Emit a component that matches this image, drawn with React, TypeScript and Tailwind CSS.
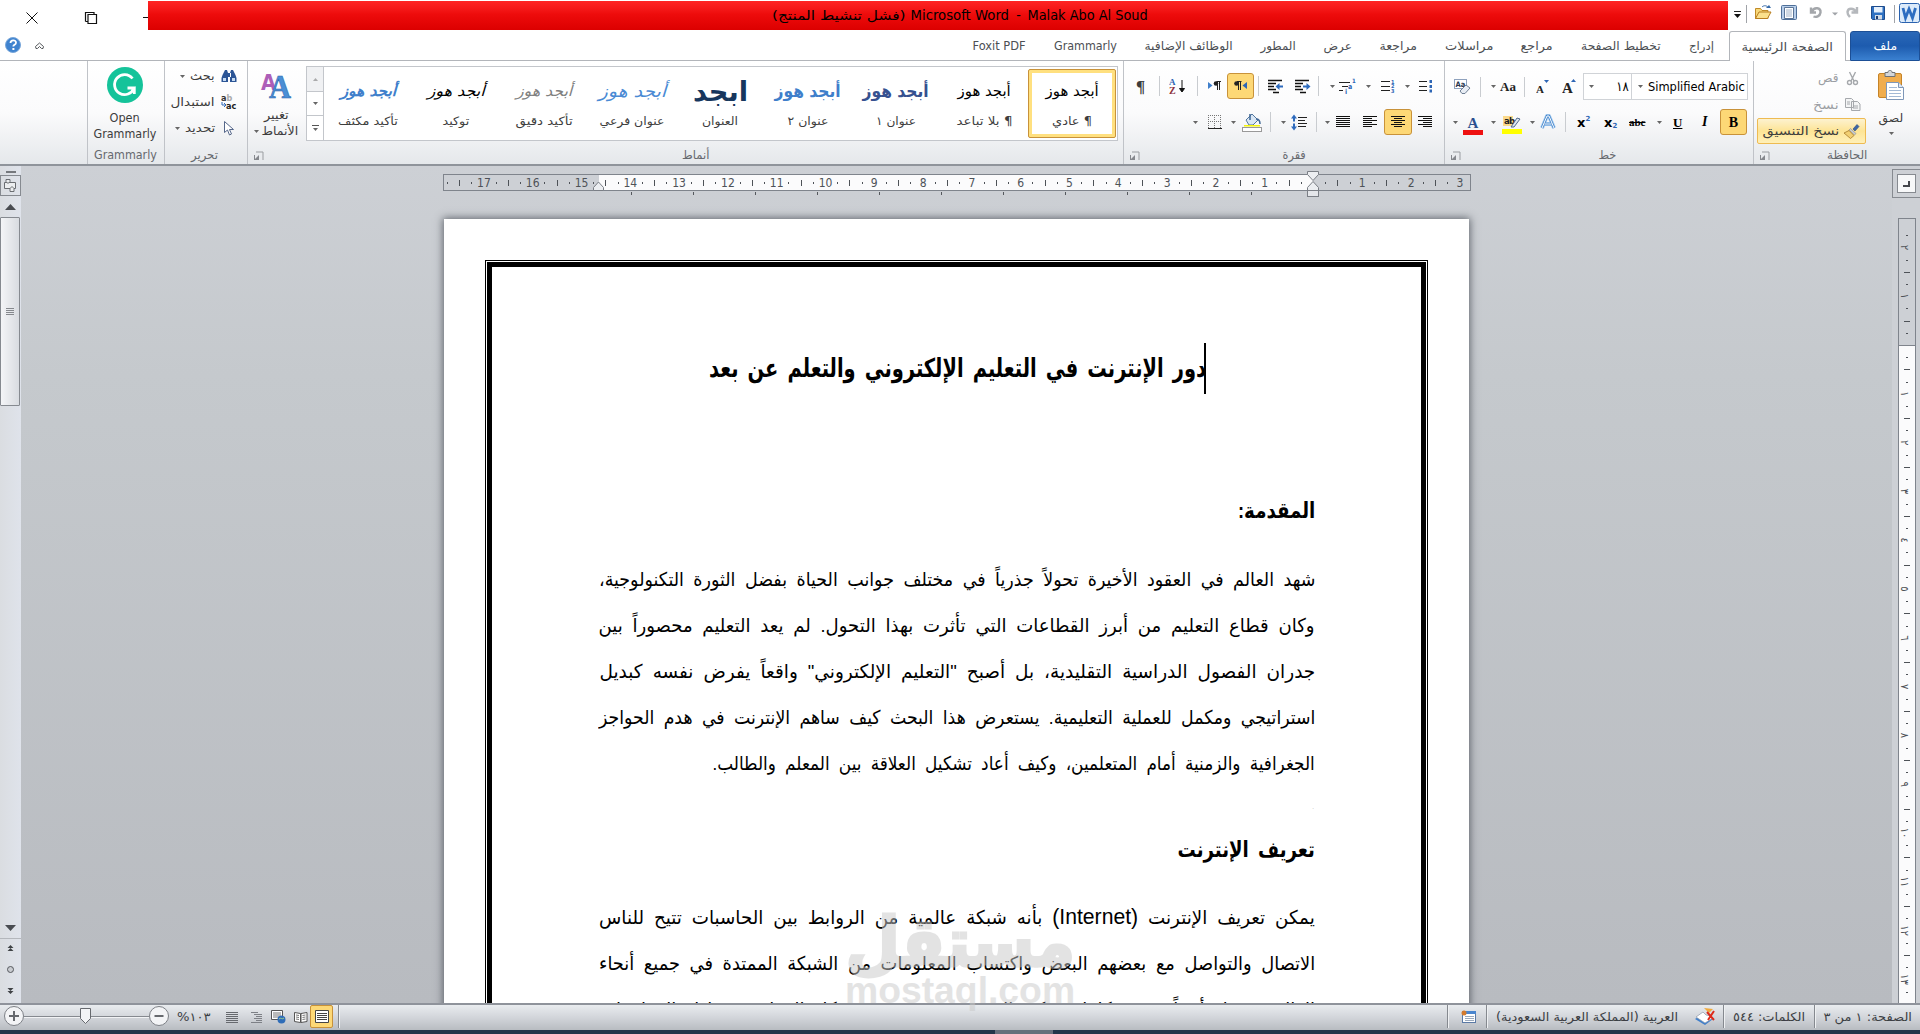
import React, { useLayoutEffect, useRef, useState } from 'react';

// Text squeezed or stretched horizontally to the width of its box
const Fit = ({ children, className = '', dir = 'auto' }: { children: React.ReactNode, className?: string, dir?: string }) => {
  const box = useRef<HTMLDivElement>(null);
  const inner = useRef<HTMLSpanElement>(null);
  const [scale, setScale] = useState(1);

  useLayoutEffect(() => {
    if (box.current && inner.current && inner.current.offsetWidth > 0) {
      setScale(box.current.clientWidth / inner.current.offsetWidth);
    }
  }, [children]);

  return (
    <div ref={box} className={`flex shrink-0 justify-center whitespace-pre ${className}`}>
      <span ref={inner} dir={dir} className="inline-block shrink-0" style={{ transform: `scaleX(${scale})` }}>{children}</span>
    </div>
  );
};

const Caret = ({ className = '' }: { className?: string }) => (
  <svg className={`shrink-0 ${className}`} width="5" height="3" viewBox="0 0 5 3"><path d="M0 0h5L2.5 3z" fill="#666" /></svg>
);

const Sep = ({ className = '' }: { className?: string }) => (
  <div className={`w-px h-5 shrink-0 bg-[#c9ccd0] ${className}`} />
);

const Launcher = () => (
  <svg className="shrink-0" width="10" height="10" viewBox="0 0 10 10">
    <path d="M2 1h7v8" fill="none" stroke="#9a9da1" />
    <path d="M0 4h1v4h4v1H0zM1 8l4-4v4z" fill="#85888d" />
  </svg>
);

// Bars of text used by the alignment icons; each row is [x, width]
const Bars = ({ rows, color = '#111', className = '' }: { rows: number[][], color?: string, className?: string }) => (
  <svg className={`shrink-0 ${className}`} width="14" height="12" viewBox="0 0 14 12" shapeRendering="crispEdges">
    {rows.map(([x, w], i) => <rect key={i} x={x} y={i * 2} width={w} height="1" fill={color} />)}
  </svg>
);

const Group = ({ label, launcher = false, className, labelClass, children }: {
  label: string,
  launcher?: boolean,
  className: string,
  labelClass: string,
  children: React.ReactNode,
}) => (
  <div className={`flex flex-col shrink-0 h-[103px] border-r border-r-[#c0c3c8] ${className}`}>
    <div className="h-[84px] flex">{children}</div>
    <div className="h-[19px] flex items-center relative text-[#66696e]">
      {launcher && <div className="absolute left-[6px] top-[6px]"><Launcher /></div>}
      <div className="flex-1 flex justify-center"><Fit className={labelClass}>{label}</Fit></div>
    </div>
  </div>
);

const TABS = [
  { text: 'Foxit PDF', w: 'w-[53px]' },
  { text: 'Grammarly', w: 'w-[63px]' },
  { text: 'الوظائف الإضافية', w: 'w-[88px]' },
  { text: 'المطور', w: 'w-[35px]' },
  { text: 'عرض', w: 'w-[28px]' },
  { text: 'مراجعة', w: 'w-[37px]' },
  { text: 'مراسلات', w: 'w-[48px]' },
  { text: 'مراجع', w: 'w-[32px]' },
  { text: 'تخطيط الصفحة', w: 'w-[80px]' },
  { text: 'إدراج', w: 'w-[25px]' },
];

const STYLES = [
  { sample: 'أبجد هوز', name: 'تأكيد مكثف', sw: 'w-[56px] text-[#3f7fcb] italic font-bold', nw: 'w-[60px]' },
  { sample: 'أبجد هوز', name: 'توكيد', sw: 'w-[57px] text-black italic', nw: 'w-[27px]' },
  { sample: 'أبجد هوز', name: 'تأكيد دقيق', sw: 'w-[56px] text-[#808080] italic', nw: 'w-[57px]' },
  { sample: 'أبجد هوز', name: 'عنوان فرعي', sw: 'w-[68px] text-[#4a8ad4] italic text-[17px]', nw: 'w-[65px]' },
  { sample: 'ابجد', name: 'العنوان', sw: 'w-[55px] text-[#17365d] text-[27px] font-bold', nw: 'w-[36px]' },
  { sample: 'أبجد هوز', name: 'عنوان ٢', sw: 'w-[66px] text-[#3f7fcb] text-[17px] font-bold', nw: 'w-[41px]' },
  { sample: 'أبجد هوز', name: 'عنوان ١', sw: 'w-[66px] text-[#365190] text-[17px] font-bold', nw: 'w-[40px]' },
  { sample: 'أبجد هوز', name: '¶ بلا تباعد', sw: 'w-[53px] text-black', nw: 'w-[56px]' },
  { sample: 'أبجد هوز', name: '¶ عادي', sw: 'w-[53px] text-black', nw: 'w-[40px]' },
];

const TitleBar = () => (
  <div className="h-[31px] flex shrink-0 bg-white">
    <svg className="shrink-0" width="148" height="31" viewBox="0 0 148 31" fill="none" stroke="#111">
      <path d="M26.5 12.5l11 11M37.5 12.5l-11 11" />
      <path d="M88 14.5h8.5v9H88zM85.500 21.500v-9H94V14M85.500 21.500H88" strokeWidth="1.200" />
      <path d="M143 17.500h5" />
    </svg>
    <div className="w-[1580px] h-[29px] mt-px shrink-0 flex items-center bg-linear-to-b from-[#ff2424] via-[#ee0c0c] via-45% to-[#dc0000] text-[14px] leading-[29px] text-black pl-[624px]">
      <Fit className="w-[133px] text-[13px]">(فشل تنشيط المنتج)</Fit>
      <Fit className="w-[99px] ml-[5px]">Microsoft Word</Fit>
      <Fit className="w-[5px] ml-[7px]">-</Fit>
      <Fit className="w-[120px] ml-[7px]">Malak Abo Al Soud</Fit>
    </div>
    <svg className="shrink-0" width="192" height="31" viewBox="1728 0 192 31">
      <path d="M1734 11.500h7" stroke="#222" />
      <path d="M1734 14h7l-3.500 4z" fill="#111" />
      <path d="M1746.500 5v18M1894.500 5v18" stroke="#a0a3a8" />
      {/* open */}
      <path d="M1755.500 18.500v-10h5l1.500 2h6v8z" fill="#f8d878" stroke="#c08a28" />
      <path d="M1755.500 18.500l3.500-6.500h12l-3.500 6.500z" fill="#fbe08c" stroke="#b87d20" />
      <path d="M1762 7c2-2 5-1.500 6 .5" fill="none" stroke="#3569a8" />
      <path d="M1766 8l5 0-2-3z" fill="#3569a8" />
      {/* page preview */}
      <rect x="1781.500" y="5.500" width="15" height="14" rx="1" fill="#b6cde9" stroke="#4f7099" />
      <path d="M1784.500 7.500h9v11h-9z" fill="#fff" stroke="#5b7597" />
      <path d="M1786 10h6M1786 12h6M1786 14h6M1786 16h6" stroke="#8aa1bd" strokeWidth=".8" />
      {/* undo, redo */}
      <path d="M1811 7.500v5h5M1812 11.500c2-5 9-4 8.500 1-.5 4-4.500 5-7 4" fill="none" stroke="#a4a7ab" strokeWidth="2.400" />
      <path d="M1832 12.500h6l-3 3z" fill="#a0a3a8" />
      <path d="M1857 7v5.500h-5.500M1856 12c-2-4-8-4.500-8.500 0 0 3 1.500 4 2.500 5" fill="none" stroke="#b5b8bc" strokeWidth="2.400" />
      {/* save */}
      <path d="M1871.500 6.500h13v13h-12l-1-1z" fill="#2f71c2" stroke="#1e4b8c" />
      <path d="M1874 7h8.500v5.500h-8.500z" fill="#e6f0fb" />
      <path d="M1875 15h7v4.500h-7z" fill="#d4dbe5" />
      <path d="M1876 16h2v3h-2z" fill="#1e3d70" />
      {/* Word */}
      <rect x="1899.500" y="3.500" width="20" height="19" rx="2" fill="#dcebfa" stroke="#2a62ae" />
      <path d="M1903 8l2.500 10 3.500-9 3.500 9 3-10" fill="none" stroke="#2d6dc0" strokeWidth="2.800" />
    </svg>
  </div>
);

const TabRow = () => (
  <div className="h-[30px] flex shrink-0 items-end bg-white text-[12px] text-[#4c4f54]">
    <div className="w-[1729px] h-[30px] flex items-center border-b border-[#b2b5ba] shrink-0">
      <svg className="shrink-0 ml-[5px]" width="42" height="20" viewBox="0 0 42 20">
        <circle cx="8" cy="9" r="7.500" fill="#3f83cf" stroke="#79a7da" />
        <path d="M5.500 7c0-3.500 5.500-3.500 5.500-.3C11 9 8.300 8.700 8.300 10.500" fill="none" stroke="#fff" strokeWidth="1.800" />
        <rect x="7.400" y="12" width="2" height="2" fill="#fff" />
        <path d="M31 12.500l-.5-2 4-3.500 4 3.500-.5 2h-1.500l-2-2-2 2z" fill="#fff" stroke="#54575b" />
      </svg>
      <div className="flex gap-7 ml-[926px]">
        {TABS.map((t) => <Fit key={t.text} className={t.w}>{t.text}</Fit>)}
      </div>
    </div>
    <div className="w-[117px] h-[30px] shrink-0 border border-b-0 border-[#b2b5ba] rounded-t-[3px] flex items-center justify-center">
      <Fit className="w-[91px]">الصفحة الرئيسية</Fit>
    </div>
    <div className="w-[4px] h-[30px] border-b border-[#b2b5ba] shrink-0" />
    <div className="w-[70px] h-[30px] shrink-0 rounded-t-[3px] border border-[#1c4f96] bg-linear-to-b from-[#2a68b8] via-[#1d5bae] to-[#3a80d0] text-white flex items-center justify-center">
      <Fit className="w-[24px]">ملف</Fit>
    </div>
  </div>
);

const StylesGallery = () => (
  <div className="w-[812px] h-[75px] mt-[5px] ml-[6px] flex border border-[#c3c6cb] bg-white shrink-0">
    <div className="w-[17px] flex flex-col border-r border-[#c3c6cb] shrink-0">
      <div className="h-[25px] flex items-center justify-center border-b border-[#c3c6cb] bg-[#f0f1f3]">
        <Caret className="rotate-180 opacity-50" />
      </div>
      <div className="h-[24px] flex items-center justify-center border-b border-[#c3c6cb]"><Caret /></div>
      <div className="flex-1 flex flex-col gap-[2px] items-center justify-center">
        <div className="w-[7px] h-px bg-[#555]" />
        <Caret />
      </div>
    </div>
    {STYLES.map((s, i) => (
      <div
        key={s.name}
        className={`w-[88px] h-[69px] mt-[2px] shrink-0 flex flex-col items-center rounded-[2px] ${i === 8 ? 'border border-[#c8923a] p-[3px] bg-[#ffe07f]' : 'p-1'}`}
      >
        <div className="w-[80px] h-[61px] bg-white flex flex-col items-center">
          <div className="h-[37px] flex items-center text-[15px] leading-none"><Fit className={s.sw}>{s.sample}</Fit></div>
          <div className="h-[24px] flex items-center text-[11.500px] text-[#3d3d3d]"><Fit dir="rtl" className={s.nw}>{s.name}</Fit></div>
        </div>
      </div>
    ))}
  </div>
);

const ParagraphTools = () => (
  <div className="flex flex-col">
    <div className="h-[26px] mt-[12px] flex items-center">
      <span className="ml-[12px] w-[10px] text-[17px] leading-none font-bold font-['Liberation_Serif',serif]">¶</span>
      <Sep className="ml-[13px]" />
      <svg className="ml-[9px] shrink-0" width="16" height="18" viewBox="0 0 16 18">
        <text x="0" y="8" fontSize="9" fontWeight="bold" fill="#2e66b5" fontFamily="Liberation Serif, serif">A</text>
        <text x="0" y="17" fontSize="10" fontWeight="bold" fill="#8c2f3c" fontFamily="Liberation Serif, serif">Z</text>
        <path d="M13 3v11M10.500 11.500L13 15l2.500-3.500z" stroke="#111" fill="#111" />
      </svg>
      <Sep className="ml-[12px]" />
      <svg className="ml-[10px] shrink-0" width="13" height="12" viewBox="0 0 13 12">
        <path d="M0 2l4.500 3.500L0 9z" fill="#3f7fcb" />
        <path d="M8.500 1.500H13M9.500 1.500V10M11.500 1.500V10" stroke="#222" fill="none" />
        <circle cx="8" cy="3.500" r="2.300" fill="#222" />
      </svg>
      <div className="ml-[6px] w-[27px] h-[26px] shrink-0 rounded-[3px] border border-[#c8923a] bg-[#fdd876] flex items-center justify-center">
        <svg width="13" height="12" viewBox="0 0 13 12">
          <path d="M13 2L8.500 5.500 13 9z" fill="#2e66b5" />
          <path d="M3 1.500h4.500M4.500 1.500V10M6.500 1.500V10" stroke="#222" fill="none" />
          <circle cx="2.500" cy="3.500" r="2.300" fill="#222" />
        </svg>
      </div>
      <Sep className="ml-[4px]" />
      <svg className="ml-[8px] shrink-0" width="17" height="15" viewBox="0 0 17 15">
        <path d="M1 1.500h14M1 4.500h8M1 7.500h6M1 10.500h8M6 13.500h6" stroke="#111" strokeWidth="1.300" />
        <path d="M8.500 7.500l4-3.500v2.500H16v2h-3.500V11z" fill="#2e6bbd" />
      </svg>
      <svg className="ml-[10px] shrink-0" width="17" height="15" viewBox="0 0 17 15">
        <path d="M1 1.500h14M1 4.500h8M1 7.500h6M1 10.500h8M6 13.500h6" stroke="#111" strokeWidth="1.300" />
        <path d="M16.500 7.500l-4-3.500v2.500H9v2h3.500V11z" fill="#2e6bbd" />
      </svg>
      <Sep className="ml-[7px]" />
      <Caret className="ml-[11px]" />
      <svg className="ml-[4px] shrink-0" width="17" height="16" viewBox="0 0 17 16">
        <path d="M0 4.500h11M3 8.500h6M0 12.500h4" stroke="#222" />
        <text x="13" y="5" fontSize="6" fontWeight="bold" fill="#2e66b5">1</text>
        <text x="9" y="10.500" fontSize="7" fontWeight="bold" fill="#2e66b5">a</text>
        <text x="6" y="15.500" fontSize="7" fontWeight="bold" fill="#2e66b5">i</text>
      </svg>
      <Caret className="ml-[10px]" />
      <svg className="ml-[10px] shrink-0" width="14" height="14" viewBox="0 0 14 14">
        <path d="M0 2.500h9M0 7.500h9M0 11.500h9" stroke="#222" />
        <text x="10" y="4.500" fontSize="5.500" fontWeight="bold" fill="#2e66b5">1</text>
        <text x="10" y="9" fontSize="5.500" fontWeight="bold" fill="#2e66b5">2</text>
        <text x="10" y="13.500" fontSize="5.500" fontWeight="bold" fill="#2e66b5">3</text>
      </svg>
      <Caret className="ml-[10px]" />
      <svg className="ml-[9px] shrink-0" width="14" height="14" viewBox="0 0 14 14">
        <path d="M0 2.500h8M0 7.500h8M0 11.500h8" stroke="#222" />
        <path d="M10.500 1h2.500v3h-2.500zM10.500 6h2.500v3h-2.500zM10.500 10.500h2.500v3h-2.500z" fill="#2e66b5" />
      </svg>
    </div>
    <div className="h-[26px] mt-[10px] flex items-center">
      <Caret className="ml-[69px]" />
      <svg className="ml-[10px] shrink-0" width="14" height="14" viewBox="0 0 14 14">
        <path d="M.5 0v14M6.500 0v14M12.500 0v14M0 .5h13M0 6.500h13" stroke="#777" strokeDasharray="1 1" />
        <path d="M0 13.500h14" stroke="#222" />
      </svg>
      <Caret className="ml-[9px]" />
      <svg className="ml-[6px] shrink-0" width="20" height="19" viewBox="0 0 20 19">
        <path d="M4 7l6-6 6 6-5 5H7z" fill="#d9e6f4" stroke="#53779f" />
        <path d="M8 1v6M14 6c3 0 4 2 4 5" fill="none" stroke="#3d6594" strokeWidth="1.500" />
        <rect x="2" y="12" width="16" height="1.500" fill="#f5f50a" />
        <rect x=".5" y="14.500" width="19" height="4" fill="#fff" stroke="#999" />
      </svg>
      <Sep className="ml-[8px]" />
      <Caret className="ml-[10px]" />
      <svg className="ml-[5px] shrink-0" width="16" height="17" viewBox="0 0 16 17">
        <path d="M3 .5l3 4H4v3H2v-3H0zM3 16.500l3-4H4v-3H2v3H0z" fill="#2e6bbd" />
        <path d="M7 3.500h9M7 6.500h7M7 9.500h9M7 12.500h8" stroke="#222" />
      </svg>
      <Sep className="ml-[9px]" />
      <Caret className="ml-[8px]" />
      <Bars className="ml-[6px]" rows={[[0, 14], [0, 14], [0, 14], [0, 14], [0, 14], [0, 14]]} />
      <Bars className="ml-[13px]" rows={[[0, 14], [0, 9], [0, 14], [0, 9], [0, 14], [0, 9]]} />
      <div className="ml-[7px] w-[28px] h-[26px] shrink-0 rounded-[3px] border border-[#c8923a] bg-[#fdd876] flex items-center justify-center">
        <Bars rows={[[0, 14], [3, 8], [0, 14], [3, 8], [0, 14], [3, 8]]} />
      </div>
      <Bars className="ml-[6px]" rows={[[0, 14], [5, 9], [0, 14], [5, 9], [0, 14], [5, 9]]} />
    </div>
  </div>
);

const FontTools = () => (
  <div className="flex flex-col text-black">
    <div className="h-[27px] mt-[12px] flex items-center">
      <svg className="ml-[9px] shrink-0" width="17" height="17" viewBox="0 0 17 17">
        <rect x=".5" y="1.500" width="12" height="9" fill="#fff" stroke="#8fa2bd" />
        <text x="1.500" y="8.500" fontSize="7.500" fontWeight="bold" fill="#26354d">Aa</text>
        <path d="M6 13l6-6 4 3-5 5.500H8z" fill="#e8edf4" stroke="#6f7f94" />
      </svg>
      <Sep className="ml-[9px]" />
      <Caret className="ml-[10px]" />
      <span className="ml-[4px] w-[17px] text-[13px] leading-none font-bold font-['Liberation_Serif',serif] text-[#222]">Aa</span>
      <Sep className="ml-[7px]" />
      <svg className="ml-[11px] shrink-0" width="14" height="17" viewBox="0 0 14 17">
        <text x="0" y="15" fontSize="11" fontWeight="bold" fill="#222" fontFamily="Liberation Serif, serif">A</text>
        <path d="M8 2h5l-2.500 3z" fill="#2e66b5" />
      </svg>
      <svg className="ml-[12px] shrink-0" width="15" height="17" viewBox="0 0 15 17">
        <text x="0" y="15" fontSize="15" fontWeight="bold" fill="#222" fontFamily="Liberation Serif, serif">A</text>
        <path d="M9 4h5l-2.500-3z" fill="#2e66b5" />
      </svg>
      <div className="ml-[6px] w-[49px] h-[27px] shrink-0 border border-[#d0d3d7] bg-white flex items-center text-[13px]">
        <Caret className="ml-[5px]" />
        <Fit className="ml-[22px] w-[13px]">١٨</Fit>
      </div>
      <div className="-ml-px w-[117px] h-[27px] shrink-0 border border-[#d0d3d7] bg-white flex items-center text-[13px]">
        <Caret className="ml-[6px]" />
        <Fit className="ml-[5px] w-[97px]">Simplified Arabic</Fit>
      </div>
    </div>
    <div className="h-[26px] mt-[9px] flex items-center font-['Liberation_Serif',serif]">
      <Caret className="ml-[8px]" />
      <div className="ml-[5px] w-[20px] shrink-0 flex flex-col items-center pt-[6px]">
        <span className="text-[15px] leading-[14px] font-bold text-[#2b4f8f]">A</span>
        <div className="w-[20px] h-[5px] bg-[#ee1111]" />
      </div>
      <Caret className="ml-[8px]" />
      <svg className="ml-[6px] mt-[3px] shrink-0" width="20" height="20" viewBox="0 0 20 20">
        <rect x="1" y="2" width="10" height="10" fill="#fbd98a" />
        <text x="2" y="10" fontSize="9.500" fontWeight="bold" fill="#222" fontFamily="DejaVu Sans Condensed" textLength="11">ab</text>
        <path d="M9 13l6-9 3 1-6 8z" fill="#dfe6f0" stroke="#516a8c" />
        <rect y="15" width="20" height="5" fill="#ffff00" />
      </svg>
      <Caret className="ml-[8px]" />
      <svg className="ml-[5px] shrink-0" width="16" height="16" viewBox="0 0 16 16">
        <path d="M2 14L7 2h2l5 12M4.500 10h7" fill="none" stroke="#a9cdf0" strokeWidth="4" strokeLinejoin="round" />
        <path d="M2 14L7 2h2l5 12M4.500 10h7" fill="none" stroke="#4586cc" strokeWidth="2.400" />
        <path d="M2 14L7 2h2l5 12M4.500 10h7" fill="none" stroke="#fff" strokeWidth="1" />
      </svg>
      <Sep className="ml-[9px]" />
      <span className="ml-[11px] w-[13px] shrink-0 whitespace-nowrap text-[13px] leading-none font-bold font-['DejaVu_Sans']">x<sup className="text-[7px] text-[#2e66b5] -top-[6px]">2</sup></span>
      <span className="ml-[14px] w-[13px] shrink-0 whitespace-nowrap text-[13px] leading-none font-bold font-['DejaVu_Sans']">x<sub className="text-[7px] text-[#2e66b5]">2</sub></span>
      <span className="ml-[12px] w-[17px] shrink-0 text-[11px] leading-none font-bold line-through">abc</span>
      <Caret className="ml-[11px]" />
      <span className="ml-[11px] w-[10px] shrink-0 text-[13px] leading-none font-bold underline">U</span>
      <span className="ml-[19px] w-[8px] shrink-0 text-[14px] leading-none font-bold italic">I</span>
      <div className="ml-[10px] w-[27px] h-[26px] shrink-0 rounded-[3px] border border-[#c8923a] bg-[#fdd876] flex items-center justify-center text-[14px] font-bold">B</div>
    </div>
  </div>
);

const Clipboard = () => (
  <>
    <div className="w-[110px] ml-[3px] flex flex-col shrink-0 text-[12px] text-[#9b9ea3]">
      <div className="h-[26px] mt-[4px] flex items-center justify-end pr-[7px]">
        <Fit className="w-[20px]">قص</Fit>
        <svg className="ml-[7px]" width="15" height="15" viewBox="0 0 15 15" fill="none" stroke="#a5a8ac" strokeWidth="1.400">
          <path d="M4.500 1l4.500 9M10.500 1L6 10" />
          <circle cx="4.500" cy="11.500" r="2" />
          <circle cx="10.500" cy="11.500" r="2" />
        </svg>
      </div>
      <div className="h-[27px] flex items-center justify-end pr-[6px]">
        <Fit className="w-[26px]">نسخ</Fit>
        <svg className="ml-[6px]" width="16" height="14" viewBox="0 0 16 14" fill="#f4f5f6" stroke="#a5a8ac">
          <path d="M.5.500h6l2 2v7h-8zM6.500 3.500h6l2.500 2.500v6.500H6.500z" />
          <path d="M2 4h3M2 6h3M8 8h5M8 10h5" />
        </svg>
      </div>
      <div className="h-[26px] w-[109px] rounded-[2px] border border-[#eebb52] bg-linear-to-b from-[#fdf2cf] via-[#fde495] to-[#fff0b8] flex items-center justify-end pr-[5px] text-[#3d3d3d]">
        <Fit className="w-[77px]">نسخ التنسيق</Fit>
        <svg className="ml-[5px]" width="16" height="15" viewBox="0 0 16 15">
          <path d="M9 5l4-4.500 2 2L11 7z" fill="#3c66a8" stroke="#284978" strokeWidth=".6" />
          <path d="M6.500 4.500l5.500 5-1.500 1.500-5.500-5z" fill="#c9cdd3" stroke="#777" strokeWidth=".5" />
          <path d="M5 6.500l5 5-3.500 3L0 9z" fill="#f2cf72" stroke="#9c6d1d" strokeWidth=".7" />
        </svg>
      </div>
    </div>
    <div className="flex flex-col items-center w-[32px] ml-[8px] mt-[9px] text-[12px] text-[#3d3d3d]">
      <svg width="27" height="30" viewBox="0 0 27 30">
        <rect x=".5" y="3.500" width="23" height="24" rx="1.500" fill="#f0ad4e" stroke="#c68428" />
        <path d="M7 2.500h3c0-3 4-3 4 0h3v4H7z" fill="#d3d6da" stroke="#6e7277" />
        <path d="M8.500 12.500h12l5 5v12h-17z" fill="#fff" stroke="#7e97b8" />
        <path d="M20.500 12.500v5h5" fill="#dfe8f3" stroke="#7e97b8" />
        <path d="M11 17.500h8M11 20.500h12M11 23.500h12M11 26.500h12" stroke="#a3b9d5" />
      </svg>
      <Fit className="w-[25px] mt-[9px] h-[18px] leading-[18px]">لصق</Fit>
      <Caret className="mt-[5px]" />
    </div>
  </>
);

const Ribbon = () => (
  <div className="h-[105px] shrink-0 flex bg-linear-to-b from-white via-[#fbfbfc] to-[#e5e8eb] border-b-2 border-[#8f949b] text-[12px] text-[#3d3d3d]">
    <div className="w-[88px] shrink-0 border-r border-r-[#c0c3c8]" />
    <Group label="Grammarly" className="w-[77px]" labelClass="w-[63px] mr-[2px]">
      <div className="flex flex-col items-center w-full pt-[6px] pr-[3px] text-[13px]">
        <svg width="36" height="36" viewBox="0 0 36 36">
          <circle cx="18" cy="18" r="18" fill="#15c39a" />
          <path d="M25.500 11.500A10 10 0 1 0 27 21h-6.500M27.300 20v7" fill="none" stroke="#fff" strokeWidth="2.800" />
        </svg>
        <Fit className="w-[30px] mt-[7px] h-[16px] leading-[16px]">Open</Fit>
        <Fit className="w-[63px] h-[16px] leading-[16px]">Grammarly</Fit>
      </div>
    </Group>
    <Group label="تحرير" className="w-[83px]" labelClass="w-[27px] mr-[3px]">
      <div className="w-full flex flex-col pt-[2px] pr-[10px]">
        <div className="h-[26px] flex items-center justify-end">
          <Caret />
          <Fit className="w-[25px] ml-[5px]">بحث</Fit>
          <svg className="ml-[6px]" width="16" height="14" viewBox="0 0 16 14">
            <path d="M1.500 6L4 1h2l1 3v9H.5V9zM14.500 6L12 1h-2L9 4v9h6.500V9zM6 4h4v4H6z" fill="#2c5596" />
            <path d="M2 9h3v3H2zM11 9h3v3h-3z" fill="#c6dbf2" />
          </svg>
        </div>
        <div className="h-[26px] flex items-center justify-end">
          <Fit className="w-[44px]">استبدال</Fit>
          <svg className="ml-[6px]" width="16" height="16" viewBox="0 0 16 16">
            <text x="0" y="7" fontSize="9" fontWeight="bold" fill="#333">a</text>
            <text x="5.500" y="7" fontSize="9" fontWeight="bold" fill="#aaa">b</text>
            <text x="5" y="15" fontSize="9" fontWeight="bold" fill="#222">ac</text>
            <path d="M1 8v3h3M3 9l2 2-2 2" fill="none" stroke="#2e66b5" />
          </svg>
        </div>
        <div className="h-[26px] flex items-center justify-end">
          <Caret />
          <Fit className="w-[30px] ml-[5px]">تحديد</Fit>
          <svg className="ml-[9px] mr-[3px]" width="10" height="15" viewBox="0 0 10 15">
            <path d="M.5.500v11l3-2.500 2 5 2-1-2-4.500h4z" fill="#fff" stroke="#55678a" />
          </svg>
        </div>
      </div>
    </Group>
    <Group label="أنماط" launcher className="w-[876px]" labelClass="w-[28px] ml-[20px]">
      <div className="w-[52px] pl-[4px] flex flex-col items-center shrink-0 pt-[10px]">
        <svg className="overflow-visible" width="30" height="28" viewBox="0 0 30 28">
          <text x="0" y="19" fontSize="22" fontWeight="bold" fill="#ad5fb8" fontFamily="DejaVu Sans" textLength="15" lengthAdjust="spacingAndGlyphs">A</text>
          <text x="8" y="27" fontSize="34" fontWeight="bold" fill="#4a8fd6" stroke="#2c66ad" strokeWidth=".6" fontFamily="Liberation Serif, serif" textLength="22" lengthAdjust="spacingAndGlyphs">A</text>
        </svg>
        <Fit className="w-[25px] mt-[9px] h-[15px] leading-[15px]">تغيير</Fit>
        <div className="flex items-center gap-[3px] h-[16px] leading-[16px]">
          <Caret />
          <Fit className="w-[37px]">الأنماط</Fit>
        </div>
      </div>
      <StylesGallery />
    </Group>
    <Group label="فقرة" launcher className="w-[321px]" labelClass="w-[23px] ml-[20px]"><ParagraphTools /></Group>
    <Group label="خط" launcher className="w-[309px]" labelClass="w-[18px] ml-[16px]"><FontTools /></Group>
    <Group label="الحافظة" launcher className="w-[166px] border-r-0" labelClass="w-[40px] ml-[20px]"><Clipboard /></Group>
  </div>
);

const ScrollBar = () => (
  <div className="w-[21px] shrink-0 bg-linear-to-r from-[#dadde1] to-[#dfe3eb] flex flex-col items-center">
    <div className="w-[10px] h-[2px] mt-[5px] bg-[#75787d] shrink-0" />
    <div className="w-[21px] h-[21px] mt-[2px] shrink-0 border border-[#868a90] flex items-center justify-center">
      <svg width="13" height="13" viewBox="0 0 13 13" fill="#eceef0" stroke="#6a6d72">
        <path d="M.5 3.500h11v6H.5z" />
        <path d="M2 .5h4v2l-2 2-2-2zM6 12.500h4v-3l-2-2-2 2z" />
      </svg>
    </div>
    <svg className="mt-[8px] shrink-0" width="11" height="6" viewBox="0 0 11 6"><path d="M0 6l5.500-6L11 6z" fill="#494c51" /></svg>
    <div className="w-[20px] h-[189px] mt-[7px] self-start shrink-0 border border-[#868a90] rounded-[1px] bg-linear-to-r from-[#f4f5f7] to-[#d8dbe0] flex flex-col items-center justify-center gap-px">
      <div className="w-2 h-px bg-[#85888d]" />
      <div className="w-2 h-px bg-[#85888d]" />
      <div className="w-2 h-px bg-[#85888d]" />
      <div className="w-2 h-px bg-[#85888d]" />
    </div>
    <div className="flex-1" />
    <svg className="shrink-0" width="11" height="6" viewBox="0 0 11 6"><path d="M0 0h11L5.500 6z" fill="#494c51" /></svg>
    <div className="w-[21px] h-px mt-[7px] bg-[#b4b7bc] shrink-0" />
    <svg className="shrink-0" width="21" height="64" viewBox="0 0 21 64">
      <path d="M10.500 6l3 3h-6zM10.500 9l3 3h-6zM10.500 55l3-3h-6zM10.500 52l3-3h-6z" fill="#3f4246" />
      <circle cx="10.500" cy="30.500" r="3" fill="#c9ccd1" stroke="#55585d" />
    </svg>
  </div>
);

const CM = 48.8;

const HorizontalRuler = () => {
  const ticks = [];
  for (let q = -12; q <= 71; q++) {
    const x = 870 - (q * CM) / 4;
    if (x < 3 || x > 1024 || q === 0) continue;
    if (q % 4 === 0) {
      ticks.push(<text key={q} x={x + 0.5} y="18" textAnchor="middle" fontSize="12" fill="#4e5258">{Math.abs(q / 4)}</text>);
    } else if (q % 2 === 0) {
      ticks.push(<rect key={q} x={Math.round(x)} y="11" width="1" height="6" fill="#4e5258" />);
    } else {
      ticks.push(<rect key={q} x={Math.round(x)} y="13" width="1" height="2" fill="#4e5258" />);
    }
  }
  return (
    <svg className="block ml-[422px] mt-[3px] shrink-0" width="1030" height="30" viewBox="0 0 1030 30">
      <rect x=".5" y="5.500" width="1027" height="16" fill="#cdd0d5" stroke="#7f848c" />
      <rect x="156" y="6" width="714" height="15" fill="#fbfbfc" />
      {ticks}
      {Array.from({ length: 11 }, (_, i) => (
        <rect key={i} x={Math.round(188 + i * 62)} y="23" width="1" height="3" fill="#55585d" />
      ))}
      <path d="M150.500 21.500v-3l5-5.500 5 5.500v3z" fill="#eceef1" stroke="#7b7f86" />
      <path d="M864.500 2.500h11v3l-5.500 6-5.500-6z" fill="#eceef1" stroke="#7b7f86" />
      <path d="M864.500 21.500v-3l5.500-6 5.500 6v3z" fill="#eceef1" stroke="#7b7f86" />
      <rect x="864.500" y="21.500" width="11" height="6" fill="#e4e6ea" stroke="#7b7f86" />
    </svg>
  );
};

const ARABIC = ['', '١', '٢', '٣', '٤', '٥', '٦', '٧', '٨', '٩', '١٠', '١١', '١٢', '١٣'];

const VerticalRuler = () => {
  const ticks = [];
  for (let q = -9; q <= 53; q++) {
    const y = 127 + (q * CM) / 4;
    if (q === 0) continue;
    if (q % 4 === 0) {
      ticks.push(
        <text key={q} transform={`translate(3 ${y}) rotate(90)`} textAnchor="middle" fontSize="11" fill="#4e5258">{ARABIC[Math.abs(q / 4)]}</text>,
      );
    } else if (q % 2 === 0) {
      ticks.push(<rect key={q} x="6" y={Math.round(y)} width="6" height="1" fill="#4e5258" />);
    } else {
      ticks.push(<rect key={q} x="8" y={Math.round(y)} width="2" height="1" fill="#4e5258" />);
    }
  }
  return (
    <div className="w-[28px] shrink-0 bg-[#cdd0d5] flex flex-col">
      <div className="w-[28px] h-[29px] mt-[3px] shrink-0 border border-r-0 border-[#868a90] flex items-center pl-[4px]">
        <div className="w-[19px] h-[19px] border border-[#868a90] bg-[#f7f8f9] flex items-center justify-center">
          <div className="w-[7px] h-[6px] border-r-2 border-b-2 border-[#44474c]" />
        </div>
      </div>
      <svg className="ml-[6px] mt-[20px] shrink-0" width="18" height="785" viewBox="0 0 18 785">
        <rect x=".5" y=".5" width="17" height="800" fill="#fbfbfc" stroke="#7f848c" />
        <rect x="1" y="1" width="16" height="126" fill="#cdd0d5" />
        <rect x="1" y="127" width="16" height="1" fill="#7f848c" />
        {ticks}
      </svg>
    </div>
  );
};

const INTRO = [
  'شهد العالم في العقود الأخيرة تحولاً جذرياً في مختلف جوانب الحياة بفضل الثورة التكنولوجية،',
  'وكان قطاع التعليم من أبرز القطاعات التي تأثرت بهذا التحول. لم يعد التعليم محصوراً بين',
  'جدران الفصول الدراسية التقليدية، بل أصبح "التعليم الإلكتروني" واقعاً يفرض نفسه كبديل',
  'استراتيجي ومكمل للعملية التعليمية. يستعرض هذا البحث كيف ساهم الإنترنت في هدم الحواجز',
];

const DocumentPage = () => (
  <div className="relative w-[1025px] h-[900px] ml-[423px] mt-[20px] shrink-0 bg-white shadow-[0_0_8px_1px_rgba(60,65,75,0.75)] pt-[41px] px-[41px]">
    <div className="w-[943px] h-[900px] border border-black p-px">
      <div className="w-[939px] h-[900px] border-[5px] border-black pt-[76px] pl-[107px] text-[19px] leading-[46px] text-black font-['Liberation_Sans','DejaVu_Sans',sans-serif] [word-spacing:5px]">
        <div className="w-[716px] flex flex-col items-end">
          <div className="relative h-[50px] w-[716px] flex">
            <Fit className="w-[497px] ml-[110px] h-[50px] leading-[50px] text-[26px] font-bold">دور الإنترنت في التعليم الإلكتروني والتعلم عن بعد</Fit>
            <div className="absolute left-[605px] top-0 w-[2px] h-[51px] bg-black" />
          </div>
          <Fit className="w-[77px] mt-[95px] text-[22px] font-bold">المقدمة:</Fit>
          <div className="h-[23px]" />
          {INTRO.map((line) => <Fit key={line} className="w-[716px]">{line}</Fit>)}
          <Fit className="w-[602px]">الجغرافية والزمنية أمام المتعلمين، وكيف أعاد تشكيل العلاقة بين المعلم والطالب.</Fit>
          <div className="h-[40px] pr-[1px] text-[6px] leading-[40px] text-[#999]">.</div>
          <Fit className="w-[137px] text-[22px] font-bold">تعريف الإنترنت</Fit>
          <div className="h-[22px]" />
          <Fit className="w-[716px] h-[46px]" dir="rtl">يمكن تعريف الإنترنت <span className="text-[22px] leading-none">(Internet)</span> بأنه شبكة عالمية من الروابط بين الحاسبات تتيح للناس</Fit>
          <Fit className="w-[716px]">الاتصال والتواصل مع بعضهم البعض واكتساب المعلومات من الشبكة الممتدة في جميع أنحاء</Fit>
          <Fit className="w-[716px]">العالم. ويمثل أيضاً بنية متكاملة تمكن المستخدمين من نشر كل المعارف وتبادل المعلومات</Fit>
        </div>
      </div>
    </div>
  </div>
);

const StatusSep = ({ className = '' }: { className?: string }) => (
  <div className={`w-[2px] h-[23px] shrink-0 border-l border-l-[#85898f] bg-[#eef0f2] ${className}`} />
);

const StatusBar = () => (
  <div className="h-[27px] pb-[2px] shrink-0 flex items-center border-t-2 border-[#8f939b] bg-linear-to-b from-[#e9ecef] via-[#d2d5da] to-[#b8bcc1] text-[12px] text-[#3b3e43]">
    <svg className="shrink-0" width="170" height="23" viewBox="0 0 170 23">
      <path d="M24 11.500h125" stroke="#85898f" />
      <path d="M24 12.500h125" stroke="#f2f3f5" />
      <circle cx="14" cy="11" r="9.500" fill="#f3f4f6" stroke="#7d8086" />
      <path d="M9 11h10M14 6v10" stroke="#66696e" strokeWidth="2" />
      <circle cx="159" cy="11" r="9.500" fill="#f3f4f6" stroke="#7d8086" />
      <path d="M154.500 11h9" stroke="#66696e" strokeWidth="2" />
      <path d="M80.500 3.500h10v10l-5 5-5-5z" fill="#f3f4f6" stroke="#66696e" />
    </svg>
    <Fit className="w-[34px] ml-[7px]" dir="ltr">%١٠٣</Fit>
    <Bars color="#66696e" className="ml-[15px] mt-[2px]" rows={[[0, 12], [0, 12], [0, 12], [0, 12], [0, 12], [0, 12]]} />
    <Bars color="#7d8086" className="ml-[11px] mt-[2px]" rows={[[0, 7], [3, 8], [5, 6], [3, 8], [5, 6], [0, 11]]} />
    <svg className="ml-[6px] mt-px shrink-0" width="15" height="14" viewBox="0 0 15 14">
      <path d="M.5.500h11v9H.5z" fill="#fff" stroke="#555" />
      <path d="M2 3h8M2 5h8M2 7h6" stroke="#777" />
      <circle cx="10.500" cy="9.500" r="4" fill="#2f6db8" />
      <path d="M8 9c2-2 3 1 5-1" stroke="#9ed08d" fill="none" />
    </svg>
    <svg className="ml-[8px] mt-px shrink-0" width="14" height="13" viewBox="0 0 14 13">
      <path d="M.5 1.500l6 1v9l-6-1zM13 1.500l-6 1v9l6-1z" fill="#fff" stroke="#555" />
      <path d="M2 4l3 .5M2 6l3 .5M2 8l3 .5M11.500 4l-3 .5M11.500 6l-3 .5M11.500 8l-3 .5" stroke="#777" />
    </svg>
    <div className="ml-[2px] w-[23px] h-[23px] shrink-0 rounded-[2px] border border-[#c8923a] bg-[#fdd876] flex items-center justify-center">
      <svg width="14" height="13" viewBox="0 0 14 13">
        <path d="M.5.500h13v12H.5z" fill="#fff" stroke="#444" />
        <path d="M2 3.500h10M2 5.500h10M2 7.500h10M2 9.500h10" stroke="#444" />
      </svg>
    </div>
    <StatusSep className="ml-[5px]" />
    <div className="flex-1" />
    <StatusSep />
    <svg className="ml-[12px] shrink-0" width="16" height="14" viewBox="0 0 16 14">
      <rect x="1.500" y="1.500" width="13" height="11" fill="#fff" stroke="#5b7aa5" />
      <rect x="1" y="1" width="14" height="3" fill="#4a86cf" />
      <path d="M4 6.500h9M4 8.500h9M4 10.500h9" stroke="#9aa9bd" />
      <circle cx="3" cy="3" r="2.500" fill="#d47b2e" />
    </svg>
    <StatusSep className="ml-[9px]" />
    <Fit className="w-[182px] ml-[8px]">العربية (المملكة العربية السعودية)</Fit>
    <svg className="ml-[17px] shrink-0" width="21" height="19" viewBox="0 0 21 19">
      <path d="M0 12l8-5 10 5-8 6z" fill="#3f7fcb" />
      <path d="M1 10l7-5 3 3 5 1 2 2-8 5z" fill="#fff" stroke="#8b97a8" strokeWidth=".7" />
      <path d="M9 1l9 1-4 4z" fill="#f0a93c" />
      <path d="M12 5l7 8M19 4l-6 9" stroke="#dd2a1b" strokeWidth="2" />
    </svg>
    <StatusSep className="ml-[7px]" />
    <Fit className="w-[72px] ml-[8px]">الكلمات: ٥٤٤</Fit>
    <StatusSep className="ml-[9px]" />
    <Fit className="w-[88px] ml-[8px] mr-[8px]">الصفحة: ١ من ٣</Fit>
  </div>
);

const App: React.FC = () => (
  <div dir="ltr" className="relative w-[1920px] h-[1034px] overflow-hidden flex flex-col bg-white font-['DejaVu_Sans_Condensed','DejaVu_Sans',sans-serif]">
    <TitleBar />
    <TabRow />
    <Ribbon />
    <div className="h-[837px] shrink-0 flex overflow-hidden bg-linear-to-b from-[#cdd0d5] via-[#c5c9cd] via-25% to-[#b8bbc0]">
      <ScrollBar />
      <div className="w-[1871px] shrink-0 flex flex-col overflow-hidden">
        <HorizontalRuler />
        <DocumentPage />
      </div>
      <VerticalRuler />
    </div>
    <StatusBar />
    <div className="h-[4px] shrink-0 bg-[#22364a] flex">
      <div className="ml-[995px] w-[58px] bg-[#66707c]" />
    </div>

    {/* Watermark over the page */}
    <div className="absolute left-[845px] top-[905px] w-[230px] flex flex-col text-[#c9c9c9] opacity-50 font-bold">
      <Fit className="w-[230px] h-[68px] leading-[76px] text-[68px] font-['DejaVu_Sans'] [-webkit-text-stroke:3px_#c9c9c9]">مستقل</Fit>
      <Fit className="w-[230px] h-[36px] leading-[36px] text-[36px] font-['Liberation_Sans']">mostaql.com</Fit>
    </div>
  </div>
);

export default App;
